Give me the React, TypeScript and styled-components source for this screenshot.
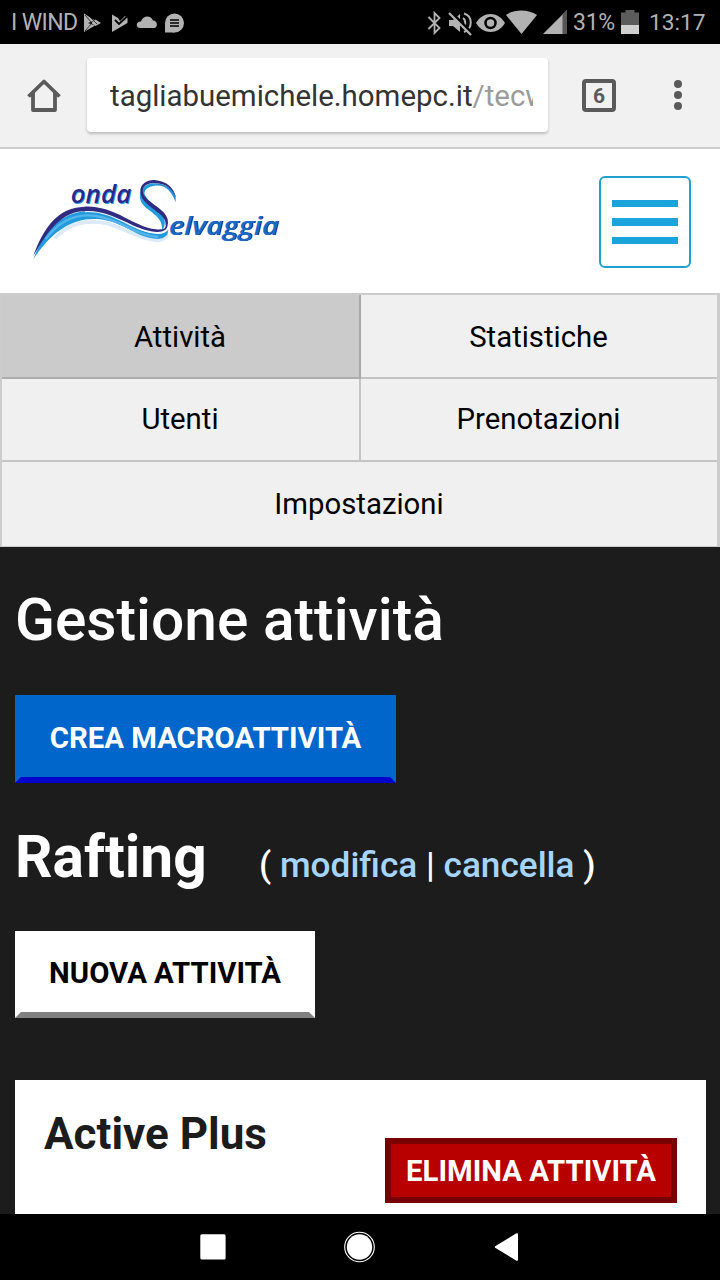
import React from "react";
import styled, { createGlobalStyle } from "styled-components";

const GlobalStyle = createGlobalStyle`
  *, *::before, *::after { box-sizing: border-box; }
  html, body { margin: 0; padding: 0; background: #1c1c1c; }
  body { font-family: Roboto, "Liberation Sans", sans-serif; }
  a { text-decoration: none; color: inherit; }
  button { font-family: inherit; border-radius: 0; margin: 0; }
  h1, h2, h3 { margin: 0; }
  svg { display: block; flex: none; }
`;

const Screen = styled.div`
  width: 720px;
  height: 1280px;
  overflow: hidden;
  display: flex;
  flex-direction: column;
`;

const StatusBar = styled.div`
  flex: none;
  height: 44px;
  background: #000;
  color: #b2b2b2;
  display: flex;
  align-items: center;
  justify-content: space-between;
  padding: 1px 15px 0 11px;
  font-size: 23px;
`;

const StatusGroup = styled.div`
  display: flex;
  align-items: center;
`;

const StatusText = styled.span<{ $width: number; $spacing?: number }>`
  width: ${(p) => p.$width}px;
  white-space: nowrap;
  letter-spacing: ${(p) => p.$spacing ?? 0}px;
`;

const Clock = styled.span`
  width: 66px;
  padding-left: 10px;
  font-size: 22.700px;
`;

const Toolbar = styled.div`
  flex: none;
  height: 105px;
  background: #f1f1f1;
  border-bottom: 2px solid #cfcfcf;
  display: flex;
  align-items: center;
  padding: 0 32px 0 27px;
`;

const AddressBar = styled.div`
  width: 461px;
  height: 74px;
  margin: -1px 34px 0 26px;
  padding: 2px 15px 0 23px;
  background: #fff;
  border-radius: 4px;
  box-shadow: 0 2px 3px rgba(0, 0, 0, 0.22);
  display: flex;
  align-items: center;
`;

const Url = styled.span`
  flex: 1;
  overflow: hidden;
  white-space: nowrap;
  color: #333;
  font-size: 29.450px;
  line-height: 44px;
`;

const UrlPath = styled.span`
  color: #9b9b9b;
`;

const TabCount = styled.div`
  width: 34px;
  height: 33px;
  border: 4px solid #5a5a5a;
  border-radius: 4px;
  color: #5a5a5a;
  font-size: 21px;
  font-weight: 700;
  line-height: 26px;
  text-align: center;
`;

const Dots = styled.div`
  margin-left: auto;
  display: flex;
  flex-direction: column;
  gap: 3px;
  padding: 0 6px 1px 0;
`;

const Dot = styled.i`
  width: 8px;
  height: 8px;
  border-radius: 50%;
  background: #5a5a5a;
`;

const SiteHeader = styled.header`
  flex: none;
  height: 144px;
  background: #fff;
  display: flex;
  align-items: flex-start;
  justify-content: space-between;
  padding: 21px 29px 0 20px;
`;

const MenuButton = styled.button`
  width: 92px;
  height: 92px;
  margin-top: 6px;
  padding: 0 11px;
  background: #fff;
  border: 2px solid #219fce;
  border-radius: 6px;
  display: flex;
  flex-direction: column;
  justify-content: center;
  gap: 11px;
`;

const MenuBar = styled.span`
  width: 66px;
  height: 7.5px;
  background: #1ba3dc;
`;

const Tabs = styled.nav`
  flex: none;
  height: 254px;
  background: #efefef;
  border: solid #ccc;
  border-width: 2px 3px 1px 2px;
  display: grid;
  grid-template-columns: 359px 1fr;
  grid-template-rows: 84px 83px 1fr;
`;

const Tab = styled.a<{ $active?: boolean; $wide?: boolean }>`
  grid-column: ${(p) => (p.$wide ? "1 / -1" : "auto")};
  background: ${(p) => (p.$active ? "#cbcbcb" : "#f0f0f0")};
  border-right: ${(p) => (p.$wide ? 0 : 2)}px solid ${(p) => (p.$active ? "#a9a9a9" : "#c4c4c4")};
  border-bottom: ${(p) => (p.$wide ? 0 : 2)}px solid ${(p) => (p.$active ? "#adadad" : "#c4c4c4")};
  padding: 0 1px 1px 0;
  &:nth-child(2n) { border-right-width: 0; }
  &:nth-child(-n + 2) { padding-bottom: 0; padding-top: 1px; }
  color: #000;
  font-size: 29.330px;
  display: flex;
  align-items: center;
  justify-content: center;
`;

const Main = styled.main`
  flex: none;
  height: 667px;
  overflow: hidden;
  background: #1c1c1c;
  color: #fff;
  padding: 38px 14px 0 15px;
`;

const PageTitle = styled.h1`
  font-size: 58.660px;
  font-weight: 500;
  line-height: 70px;
  white-space: nowrap;
`;

const ActionButton = styled.button<{ $primary?: boolean }>`
  display: block;
  width: ${(p) => (p.$primary ? 381 : 300)}px;
  height: ${(p) => (p.$primary ? 88 : 87)}px;
  padding: 0 0 ${(p) => (p.$primary ? 3 : 4)}px;
  white-space: nowrap;
  font-size: 29.330px;
  font-weight: 700;
  color: ${(p) => (p.$primary ? "#fff" : "#000")};
  background: ${(p) => (p.$primary ? "#0066cb" : "#fff")};
  border: 6px solid ${(p) => (p.$primary ? "#0066cb" : "#fff")};
  border-bottom-color: ${(p) => (p.$primary ? "#0000cb" : "#808080")};
`;

const CreateButton = styled(ActionButton)`
  margin-top: 40px;
`;

const NewButton = styled(ActionButton)`
  margin-top: 39px;
`;

const SectionHead = styled.div`
  display: flex;
  align-items: baseline;
  height: 70px;
  margin-top: 39px;
  line-height: 70px;
`;

const SectionTitle = styled.h2`
  width: 244px;
  font-size: 58.660px;
  font-weight: 700;
`;

const SectionLinks = styled.span`
  font-size: 35.200px;
  font-weight: 500;
  white-space: nowrap;
`;

const SectionLink = styled.a`
  color: #a5d5ff;
`;

const Card = styled.section`
  height: 160px;
  margin-top: 62px;
  background: #fff;
  display: flex;
  align-items: flex-start;
  justify-content: space-between;
  padding: 0 29px;
`;

const CardTitle = styled.h3`
  margin-top: 28px;
  color: #1c1c1c;
  font-size: 44px;
  font-weight: 700;
  line-height: 52px;
`;

const DeleteButton = styled.button`
  width: 292px;
  height: 65px;
  margin-top: 58px;
  padding: 0;
  white-space: nowrap;
  background: #b90000;
  border: 6px solid #780000;
  color: #fff;
  font-size: 29.330px;
  font-weight: 700;
`;

const SystemNav = styled.div`
  flex: none;
  height: 66px;
  background: #000;
`;

const NotificationIcons = () => (
  <svg width="106" height="24" viewBox="0 0 106 24" fill="#b2b2b2">
    <path d="M1 2.500L12 9.500L5 12L12 14.500L1 21Z" />
    <path d="M12.500 8.500L18 12L12.500 15L8 12Z" />
    <path d="M2 4L9 12L2 20M6 5L14 13" stroke="#000" strokeWidth=".7" fill="none" />
    <path d="M29 3.500L35 7L37 10L42 5L44.500 7V12L29 21Z" />
    <path d="M32 9L36 13L43.500 6" stroke="#000" strokeWidth="1.800" fill="none" />
    <path d="M57.500 17C52 17 53 10 58 10.500C60 4 68 4 70 9.500C75 9.500 75 17 71 17Z" />
    <circle cx="91.500" cy="12" r="9.500" />
    <path d="M82 12V21.500H92Z" />
    <path d="M87 9H96M87 12H96M87 15H96" stroke="#000" strokeWidth="1.500" />
  </svg>
);

const SystemIcons = () => (
  <svg width="146" height="28" viewBox="0 0 146 28" fill="#b2b2b2">
    <path d="M1.500 8L12.500 19L7.500 24V4L12.500 9L1.500 20" fill="none" stroke="#b2b2b2" strokeWidth="1.800" />
    <path d="M22 11H26L33 5V23L26 17H22Z" />
    <path d="M36 9C39 11 39 17 36 19M37 4.500C46 7 46 20 37 23" fill="none" stroke="#b2b2b2" strokeWidth="2" />
    <path d="M24 3L46 25" stroke="#000" strokeWidth="2.500" />
    <path d="M22 4L44 26" stroke="#b2b2b2" strokeWidth="2.300" />
    <path d="M49 14C56 2 71 2 78 14C71 26 56 26 49 14Z" />
    <circle cx="63.500" cy="14" r="5" fill="#b2b2b2" stroke="#000" strokeWidth="2.500" />
    <path d="M79 6C88 0 101 0 110 6L94.500 25Z" />
    <path d="M116 25L140 1V25Z" />
    <path d="M135.500 5.500L140 1V25H135.500Z" fill="#555" />
  </svg>
);

const BatteryIcon = () => (
  <svg width="18" height="26" viewBox="0 0 18 26">
    <path d="M0 2.500H4.500V0H13.500V2.500H18V24H0Z" fill="#5c5c5c" />
    <path d="M0 15H18V24H0Z" fill="#d0d0d0" />
  </svg>
);

const HomeIcon = () => (
  <svg width="34" height="34" viewBox="0 0 34 34" fill="none" stroke="#5a5a5a" strokeWidth="3.800" strokeLinejoin="round">
    <path d="M1.500 17.500L17 2.500L32.500 17.500" />
    <path d="M6 14V31H28V14" />
  </svg>
);

const Logo = () => (
  <svg width="270" height="100" viewBox="0 0 810 300" fontFamily='"Open Sans", "Noto Sans", sans-serif' fontStyle="italic">
    <g transform="translate(15 15)">
      <path d="M90 190C130 145 180 132 245 145C300 160 350 195 400 196Q422 195 426 176" fill="none" stroke="#dbeaf6" strokeWidth="11" />
      <path d="M25 253C50 185 95 112 188 108C285 110 325 174 398 176Q418 177 430 164Q430 190 398 192C335 190 300 142 225 133C155 124 85 160 25 253Z" fill="#229bdd" />
      <path d="M62 192C103 137 156 115 212 123C286 133 332 181 400 186" fill="none" stroke="#55b4ea" strokeWidth="7" />
      <path d="M180 109C275 105 320 170 395 174Q418 176 430 159" fill="none" stroke="#f4f7fc" strokeWidth="5" />
      <path d="M25 243C56 157 98 98 178 95C272 91 324 157 393 163Q420 166 428 151Q426 172 395 171C323 165 272 110 191 108C114 105 72 161 25 243Z" fill="#302a80" />
      <path d="M392 32C420 29 439 47 452 82V62C441 38 417 27 392 25Z" fill="#238fd3" />
      <path d="M392 32C369 33 352 47 361 62C374 87 423 103 420 145Q419 156 411 166C414 139 397 124 369 103C347 87 338 66 350 45C360 29 375 24 392 25Z" fill="#229bdd" />
      <path d="M377 83C400 105 424 119 421 150" fill="none" stroke="#b9dcf4" strokeWidth="4" />
      <path d="M452 65C438 33 412 24 385 24C363 25 350 37 354 53C361 82 421 99 428 133Q432 154 418 166Q426 148 419 134C404 107 349 89 346 52C344 25 368 14 389 15C423 18 447 38 452 65Z" fill="#302a80" />
    </g>
    <g fontSize="78" fontWeight="600">
      <text x="154" y="101" textLength="182" lengthAdjust="spacingAndGlyphs" fill="#36a1df">onda</text>
      <text x="152" y="99" textLength="182" lengthAdjust="spacingAndGlyphs" fill="#29298b">onda</text>
      <text x="449" y="196" textLength="330" lengthAdjust="spacingAndGlyphs" fill="#28258a">elvaggia</text>
      <text x="446" y="194" textLength="330" lengthAdjust="spacingAndGlyphs" fill="#176bc5">elvaggia</text>
    </g>
  </svg>
);

const NavIcons = () => (
  <svg width="720" height="66" viewBox="0 0 720 66" fill="#fff">
    <rect x="200.300" y="20.300" width="25.300" height="25.300" rx="1.500" />
    <circle cx="359.500" cy="33" r="12.700" />
    <circle cx="359.500" cy="33" r="14.800" fill="none" stroke="#fff" strokeWidth="1.100" />
    <path d="M495.500 32Q494 33 495.500 34L516 46.500Q518 47.500 518 45.500V20.500Q518 18.500 516 19.500Z" />
  </svg>
);

export default function App() {
  return (
    <Screen>
      <GlobalStyle />
      <StatusBar>
        <StatusGroup>
          <StatusText $width={72} $spacing={-0.6}>I WIND</StatusText>
          <NotificationIcons />
        </StatusGroup>
        <StatusGroup>
          <SystemIcons />
          <StatusText $width={48} $spacing={-0.3}>31%</StatusText>
          <BatteryIcon />
          <Clock>13:17</Clock>
        </StatusGroup>
      </StatusBar>
      <Toolbar>
        <HomeIcon />
        <AddressBar>
          <Url>tagliabuemichele.homepc.it<UrlPath>/tecw</UrlPath></Url>
        </AddressBar>
        <TabCount>6</TabCount>
        <Dots><Dot /><Dot /><Dot /></Dots>
      </Toolbar>
      <SiteHeader>
        <Logo />
        <MenuButton aria-label="Menu"><MenuBar /><MenuBar /><MenuBar /></MenuButton>
      </SiteHeader>
      <Tabs>
        <Tab $active>Attività</Tab>
        <Tab>Statistiche</Tab>
        <Tab>Utenti</Tab>
        <Tab>Prenotazioni</Tab>
        <Tab $wide>Impostazioni</Tab>
      </Tabs>
      <Main>
        <PageTitle>Gestione attività</PageTitle>
        <CreateButton $primary>CREA MACROATTIVITÀ</CreateButton>
        <SectionHead>
          <SectionTitle>Rafting</SectionTitle>
          <SectionLinks>
            ( <SectionLink>modifica</SectionLink> | <SectionLink>cancella</SectionLink> )
          </SectionLinks>
        </SectionHead>
        <NewButton>NUOVA ATTIVITÀ</NewButton>
        <Card>
          <CardTitle>Active Plus</CardTitle>
          <DeleteButton>ELIMINA ATTIVITÀ</DeleteButton>
        </Card>
      </Main>
      <SystemNav><NavIcons /></SystemNav>
    </Screen>
  );
}
